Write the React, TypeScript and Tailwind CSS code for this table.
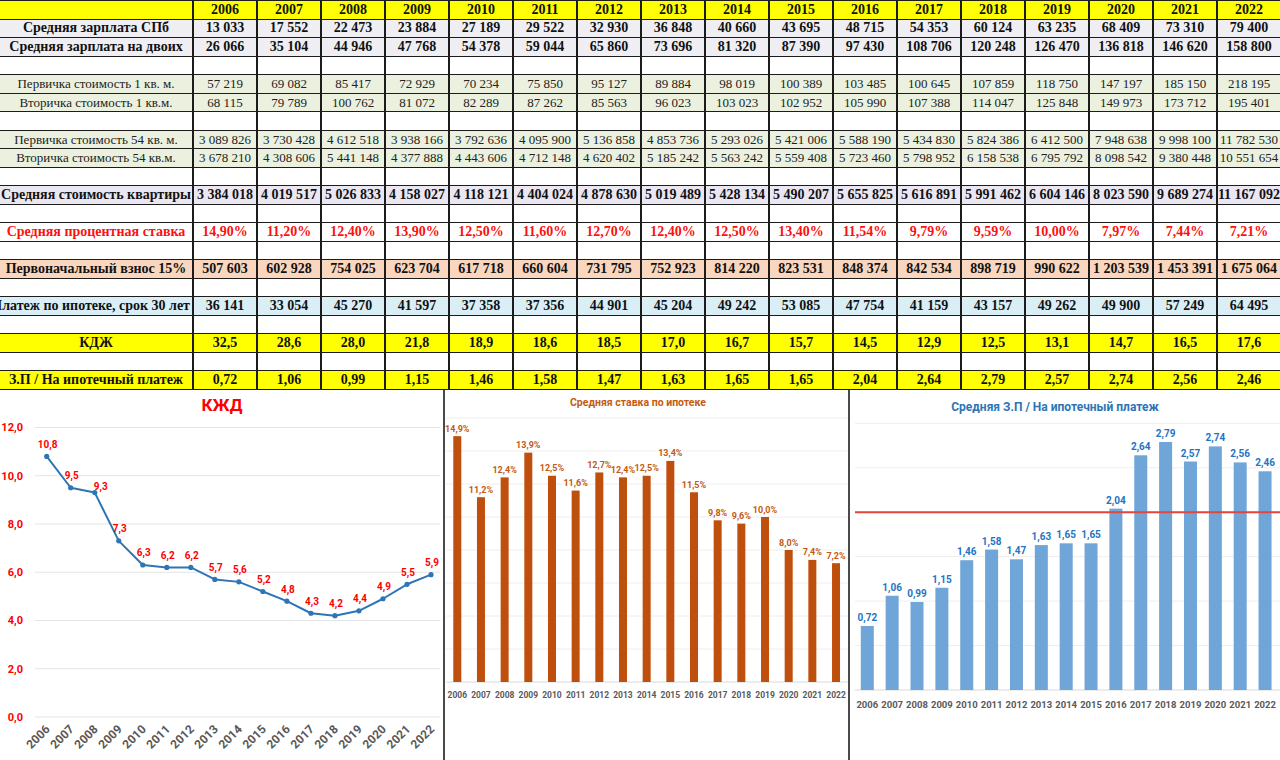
import React from "react";

const years = Array.from({ length: 17 }, (_, i) => 2006 + i);

type Row = {
  label?: string;
  values?: string[];
  bg: string;
  text: string;
  alignEnd?: boolean;
};

const split = (s: string) => s.split("|");

const rows: Row[] = [
  {
    label: "Средняя зарплата СПб",
    values: split("13 033|17 552|22 473|23 884|27 189|29 522|32 930|36 848|40 660|43 695|48 715|54 353|60 124|63 235|68 409|73 310|79 400"),
    bg: "bg-[#efeff3]",
    text: "font-bold text-[#111]",
  },
  {
    label: "Средняя зарплата на двоих",
    values: split("26 066|35 104|44 946|47 768|54 378|59 044|65 860|73 696|81 320|87 390|97 430|108 706|120 248|126 470|136 818|146 620|158 800"),
    bg: "bg-[#efeff3]",
    text: "font-bold text-[#111]",
  },
  { bg: "bg-white", text: "" },
  {
    label: "Первичка стоимость 1 кв. м.",
    values: split("57 219|69 082|85 417|72 929|70 234|75 850|95 127|89 884|98 019|100 389|103 485|100 645|107 859|118 750|147 197|185 150|218 195"),
    bg: "bg-[#ebf1de]",
    text: "font-normal text-[13px] text-[#222]",
  },
  {
    label: "Вторичка стоимость 1 кв.м.",
    values: split("68 115|79 789|100 762|81 072|82 289|87 262|85 563|96 023|103 023|102 952|105 990|107 388|114 047|125 848|149 973|173 712|195 401"),
    bg: "bg-[#ebf1de]",
    text: "font-normal text-[13px] text-[#222]",
  },
  { bg: "bg-white", text: "" },
  {
    label: "Первичка стоимость 54 кв. м.",
    values: split("3 089 826|3 730 428|4 612 518|3 938 166|3 792 636|4 095 900|5 136 858|4 853 736|5 293 026|5 421 006|5 588 190|5 434 830|5 824 386|6 412 500|7 948 638|9 998 100|11 782 530"),
    bg: "bg-[#ebf1de]",
    text: "font-normal text-[13px] text-[#222]",
  },
  {
    label: "Вторичка стоимость 54 кв.м.",
    values: split("3 678 210|4 308 606|5 441 148|4 377 888|4 443 606|4 712 148|4 620 402|5 185 242|5 563 242|5 559 408|5 723 460|5 798 952|6 158 538|6 795 792|8 098 542|9 380 448|10 551 654"),
    bg: "bg-[#ebf1de]",
    text: "font-normal text-[13px] text-[#222]",
  },
  { bg: "bg-white", text: "" },
  {
    label: "Средняя стоимость квартиры",
    values: split("3 384 018|4 019 517|5 026 833|4 158 027|4 118 121|4 404 024|4 878 630|5 019 489|5 428 134|5 490 207|5 655 825|5 616 891|5 991 462|6 604 146|8 023 590|9 689 274|11 167 092"),
    bg: "bg-[#ebe7f2]",
    text: "font-bold text-[#111]",
  },
  { bg: "bg-white", text: "" },
  {
    label: "Средняя процентная ставка",
    values: split("14,90%|11,20%|12,40%|13,90%|12,50%|11,60%|12,70%|12,40%|12,50%|13,40%|11,54%|9,79%|9,59%|10,00%|7,97%|7,44%|7,21%"),
    bg: "bg-white",
    text: "font-bold text-[#ff1010]",
  },
  { bg: "bg-white", text: "" },
  {
    label: "Первоначальный взнос 15%",
    values: split("507 603|602 928|754 025|623 704|617 718|660 604|731 795|752 923|814 220|823 531|848 374|842 534|898 719|990 622|1 203 539|1 453 391|1 675 064"),
    bg: "bg-[#f9d6bd]",
    text: "font-bold text-[#111]",
  },
  { bg: "bg-white", text: "" },
  {
    label: "Платеж по ипотеке, срок 30 лет",
    values: split("36 141|33 054|45 270|41 597|37 358|37 356|44 901|45 204|49 242|53 085|47 754|41 159|43 157|49 262|49 900|57 249|64 495"),
    bg: "bg-[#d9eef5]",
    text: "font-bold text-[#111]",
    alignEnd: true,
  },
  { bg: "bg-white", text: "" },
  {
    label: "КДЖ",
    values: split("32,5|28,6|28,0|21,8|18,9|18,6|18,5|17,0|16,7|15,7|14,5|12,9|12,5|13,1|14,7|16,5|17,6"),
    bg: "bg-[#ffff00]",
    text: "font-bold text-[#111]",
  },
  { bg: "bg-white", text: "" },
  {
    label: "З.П / На ипотечный платеж",
    values: split("0,72|1,06|0,99|1,15|1,46|1,58|1,47|1,63|1,65|1,65|2,04|2,64|2,79|2,57|2,74|2,56|2,46"),
    bg: "bg-[#ffff00]",
    text: "font-bold text-[#111]",
  },
];

const DataTable = () => (
  <div className="grid h-[390px] grid-cols-[192px_repeat(17,minmax(0,1fr))] grid-rows-[repeat(21,minmax(0,1fr))] gap-x-[2px] gap-y-px bg-[#1c1c1c] py-px font-['Liberation_Serif','Times_New_Roman',serif] text-[14px] leading-none">
    <div className="bg-[#ffff00]" />
    {years.map((y) => (
      <div key={y} className="flex items-center justify-center bg-[#ffff00] font-bold text-[#111]">
        {y}
      </div>
    ))}
    {rows.map((row, r) => (
      <React.Fragment key={r}>
        <div
          className={`flex items-center overflow-hidden whitespace-nowrap ${row.bg} ${row.text} ${
            row.alignEnd ? "justify-end pr-[2px]" : "justify-center"
          }`}
        >
          {row.label}
        </div>
        {years.map((y, i) => (
          <div
            key={y}
            className={`flex items-center justify-center overflow-hidden whitespace-nowrap ${row.bg} ${row.text}`}
          >
            {row.values ? row.values[i] : null}
          </div>
        ))}
      </React.Fragment>
    ))}
  </div>
);

const chartFont = "Roboto, 'Open Sans', sans-serif";
const fmt1 = (v: number) => v.toFixed(1).replace(".", ",");

const kzhd = [10.8, 9.5, 9.3, 7.3, 6.3, 6.2, 6.2, 5.7, 5.6, 5.2, 4.8, 4.3, 4.2, 4.4, 4.9, 5.5, 5.9];

const KzhdChart = () => {
  const x = (i: number) => 46.7 + i * 24.02;
  const y = (v: number) => 327 - v * 24.13;
  const points = kzhd.map((v, i) => `${x(i)},${y(v)}`).join(" ");
  return (
    <svg width={443} height={370} viewBox="0 0 443 370" fontFamily={chartFont}>
      <text x={222} y={21} textAnchor="middle" fill="#ff0000" fontSize={17} fontWeight={700}>
        КЖД
      </text>
      {[0, 2, 4, 6, 8, 10, 12].map((v) => (
        <g key={v}>
          <line x1={35} x2={440} y1={y(v)} y2={y(v)} stroke="#e4e4e4" strokeWidth={1} />
          <text x={23} y={y(v) + 4} textAnchor="end" fill="#ff0000" fontSize={11} fontWeight={700}>
            {fmt1(v)}
          </text>
        </g>
      ))}
      <polyline points={points} fill="none" stroke="#2e75b6" strokeWidth={2} strokeLinejoin="round" />
      {kzhd.map((v, i) => (
        <circle key={i} cx={x(i)} cy={y(v)} r={2.6} fill="#2e75b6" />
      ))}
      {kzhd.map((v, i) => (
        <text
          key={i}
          x={x(i) + (i === 2 ? 6 : 1)}
          y={y(v) - (i === 2 ? 2.5 : 8.5)}
          textAnchor="middle"
          fill="#ff0000"
          fontSize={10}
          fontWeight={700}
        >
          {fmt1(v)}
        </text>
      ))}
      {years.map((yr, i) => (
        <text
          key={yr}
          transform={`translate(${x(i) + 4},${340}) rotate(-45)`}
          textAnchor="end"
          fill="#595959"
          fontSize={12}
          fontWeight={700}
        >
          {yr}
        </text>
      ))}
    </svg>
  );
};

const rates = [14.9, 11.2, 12.4, 13.9, 12.5, 11.6, 12.7, 12.4, 12.5, 13.4, 11.5, 9.8, 9.6, 10.0, 8.0, 7.4, 7.2];

const RateChart = () => {
  const x = (i: number) => 12.3 + i * 23.67;
  const base = 292;
  const y = (v: number) => base - v * 16.5;
  return (
    <svg width={403} height={370} viewBox="0 0 403 370" fontFamily={chartFont}>
      <text x={193} y={16} textAnchor="middle" fill="#c55a11" fontSize={10.5} fontWeight={700}>
        Средняя ставка по ипотеке
      </text>
      {[1, 2, 3, 4, 5, 6, 7, 8].map((k) => (
        <line key={k} x1={1} x2={403} y1={base - k * 33} y2={base - k * 33} stroke="#eeeeee" strokeWidth={1} />
      ))}
      <line x1={1} x2={403} y1={base} y2={base} stroke="#d9d9d9" strokeWidth={1} />
      {rates.map((v, i) => (
        <g key={i}>
          <rect x={x(i) - 4} y={y(v)} width={8} height={base - y(v)} fill="#bf4f0c" />
          <text x={x(i)} y={y(v) - 4.5} textAnchor="middle" fill="#c55a11" fontSize={9} fontWeight={700}>
            {fmt1(v)}%
          </text>
        </g>
      ))}
      {years.map((yr, i) => (
        <text key={yr} x={x(i)} y={308} textAnchor="middle" fill="#595959" fontSize={8.5} fontWeight={700}>
          {yr}
        </text>
      ))}
    </svg>
  );
};

const ratio = [0.72, 1.06, 0.99, 1.15, 1.46, 1.58, 1.47, 1.63, 1.65, 1.65, 2.04, 2.64, 2.79, 2.57, 2.74, 2.56, 2.46];

const RatioChart = () => {
  const x = (i: number) => 17.3 + i * 24.86;
  const base = 300;
  const y = (v: number) => base - v * 88.9;
  return (
    <svg width={430} height={370} viewBox="0 0 430 370" fontFamily={chartFont}>
      <text x={205} y={21} textAnchor="middle" fill="#2e75b6" fontSize={12} fontWeight={700}>
        Средняя З.П / На ипотечный платеж
      </text>
      {[1, 2, 3, 4, 5, 6].map((k) => (
        <line key={k} x1={5} x2={430} y1={base - k * 44.45} y2={base - k * 44.45} stroke="#eeeeee" strokeWidth={1} />
      ))}
      <line x1={5} x2={430} y1={base} y2={base} stroke="#d9d9d9" strokeWidth={1} />
      {ratio.map((v, i) => (
        <g key={i}>
          <rect x={x(i) - 6.5} y={y(v)} width={13} height={base - y(v)} fill="#70a5d8" />
          <text x={x(i)} y={y(v) - 5} textAnchor="middle" fill="#1f74c4" fontSize={10} fontWeight={700}>
            {v.toFixed(2).replace(".", ",")}
          </text>
        </g>
      ))}
      <line x1={5} x2={430} y1={y(2)} y2={y(2)} stroke="#e2453b" strokeWidth={2} />
      {years.map((yr, i) => (
        <text key={yr} x={x(i)} y={318} textAnchor="middle" fill="#595959" fontSize={9.5} fontWeight={700}>
          {yr}
        </text>
      ))}
    </svg>
  );
};

export default function App() {
  return (
    <div className="h-[760px] w-[1280px] overflow-hidden bg-white">
      <DataTable />
      <div className="flex h-[370px]">
        <div className="w-[443px] shrink-0">
          <KzhdChart />
        </div>
        <div className="w-[407px] shrink-0 border-x-2 border-[#4a4a4a]">
          <RateChart />
        </div>
        <div className="min-w-0 flex-1">
          <RatioChart />
        </div>
      </div>
    </div>
  );
}
